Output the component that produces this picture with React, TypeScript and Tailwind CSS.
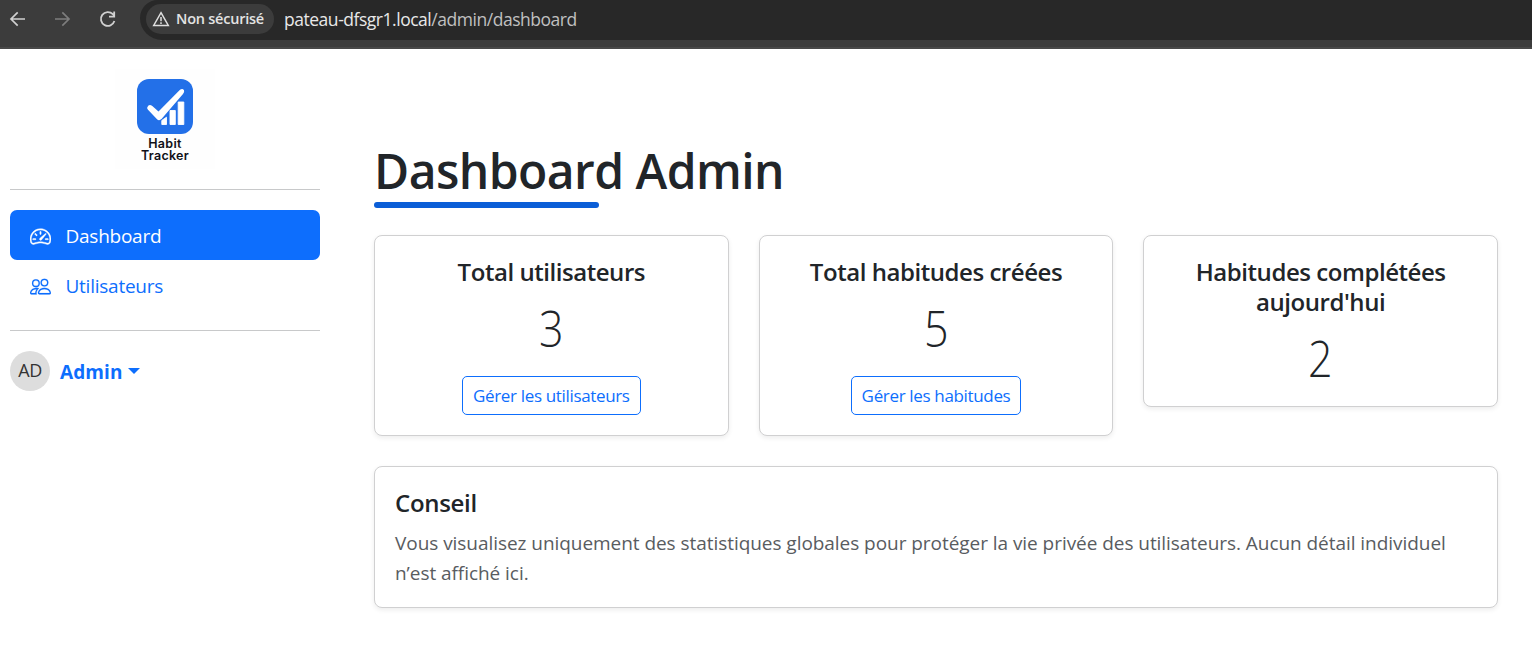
import type { ReactNode } from "react";
import { BsPeople, BsSpeedometer2 } from "react-icons/bs";

function BrowserBar() {
  return (
    <header className="flex h-[49px] items-start border-b-2 border-[#484848] bg-[#3c3c3c]">
      <div className="flex h-[37px] w-[140px] shrink-0 items-center">
        <svg className="ml-[9px] h-[18px] w-[18px]" viewBox="0 0 18 18" fill="none" stroke="#d0d0d0" strokeWidth="1.7">
          <path d="M16 9H2.5M8.7 2.3 2 9l6.7 6.7" />
        </svg>
        <svg className="ml-[27px] h-[18px] w-[18px]" viewBox="0 0 18 18" fill="none" stroke="#7d7d7d" strokeWidth="1.7">
          <path d="M1 9h13.500M8.300 2.300 15 9l-6.700 6.700" />
        </svg>
        <svg className="ml-[27px] h-[18px] w-[18px]" viewBox="0 0 18 18" fill="none" stroke="#d0d0d0" strokeWidth="1.8">
          <path d="M15.400 11A6.900 6.900 0 1 1 13.800 4.200L15.200 5.700M15.200 1.500V6.700H10" />
        </svg>
      </div>
      <div className="flex h-10 grow items-start rounded-bl-[22px] rounded-tl-[18px] bg-[#282828] pl-[6px] pt-1">
        <div className="flex h-[30px] w-32 items-center rounded-full bg-[#3c3c3c] pl-[6px]">
          <svg className="h-[18px] w-[18px] shrink-0" viewBox="0 0 18 18" fill="none" stroke="#dedede" strokeWidth="1.5">
            <path d="M9 2.700 16.300 15.500H1.700Z" />
            <path d="M9 7v4.300M9 12.300v1.700" />
          </svg>
          <span className="ml-[6px] whitespace-nowrap text-[14.5px] font-semibold tracking-[-0.23px] text-[#e3e3e3]">Non sécurisé</span>
        </div>
        <span className="ml-[10px] whitespace-nowrap text-[17.500px] leading-[31px] tracking-[-0.47px] text-[#e8e8e8]">
          pateau-dfsgr1.local<span className="text-[#c0c0c0]">/admin/dashboard</span>
        </span>
      </div>
    </header>
  );
}

function Logo() {
  return (
    <div className="mx-auto flex h-[100px] w-[100px] flex-col items-center bg-[#fefefe] pt-[10px]">
      <svg className="h-[55px] w-[56px] shrink-0" viewBox="0 0 56 55">
        <rect width="56" height="55" rx="12" fill="#2370e8" />
        <path
          d="M10.300 28.300Q12 24.300 15.300 27L21.500 32.500 43 10.800Q45.500 8.800 47 11.300 47.700 13 46 15L24.500 40Q22 42.300 19.800 39.900L11 30.800Q9.800 29.700 10.300 28.300Z"
          fill="#fff"
        />
        <path d="M24.800 41.500 29.500 38.200V45.500h-4.700ZM33 31.500h5.300v14H33ZM41.200 23h5.600v22.500h-5.600Z" fill="#fff" stroke="#fff" strokeWidth=".9" strokeLinejoin="round" />
      </svg>
      <div className="mt-1 text-center font-['Inter',sans-serif] text-[12.5px] font-semibold leading-[12px] tracking-[0.3px] text-[#101018]">
        Habit
        <br />
        Tracker
      </div>
    </div>
  );
}

function Sidebar() {
  return (
    <aside className="w-[330px] shrink-0 px-[10px] pt-5">
      <Logo />
      <hr className="mt-5 border-[#c8c9ca]" />
      <nav className="mt-5 text-[19px] leading-[30px]">
        <a className="flex h-[50px] items-center rounded-[7px] bg-[#0d6efd] pl-[19.5px] pt-0.5 text-white">
          <BsSpeedometer2 className="h-[21px] w-[21px]" stroke="currentColor" strokeWidth={0.3} />
          <span className="ml-[15px] tracking-[-0.25px]">Dashboard</span>
        </a>
        <a className="flex h-[50px] items-center pl-[19.5px] pt-0.5 text-[#0d6efd]">
          <BsPeople className="h-[21px] w-[21px]" stroke="currentColor" strokeWidth={0.1} />
          <span className="ml-[15px] tracking-[-0.25px]">Utilisateurs</span>
        </a>
      </nav>
      <hr className="mt-5 border-[#c8c9ca]" />
      <div className="mt-5 flex items-center text-[#0d6efd]">
        <div className="flex h-10 w-10 items-center justify-center rounded-full bg-[#ddd] pb-0.5 text-[18px] tracking-[-0.5px] text-[#333]">AD</div>
        <span className="ml-[10px] pt-0.5 text-[19px] font-bold tracking-[0.1px]">Admin</span>
        <span className="ml-[5px] border-x-[6px] border-t-[6px] border-x-transparent border-t-[#0d6efd]" />
      </div>
    </aside>
  );
}

function Card({ className = "", children }: { className?: string; children: ReactNode }) {
  return (
    <section className={`rounded-lg border border-[#d0d0d1] bg-white px-5 pb-5 pt-[21px] shadow-[0_2px_5px_rgba(0,0,0,0.075)] ${className}`}>
      {children}
    </section>
  );
}

function StatCard({ title, value, action }: { title: string; value: number; action?: string }) {
  return (
    <Card className="flex flex-col items-center text-center">
      <h2 className="text-[24px] font-[560] leading-[30px] tracking-[-0.45px]">{title}</h2>
      <p className="mt-[11px] h-[58px] scale-x-[0.86] text-[50px] font-light leading-[60px]">{value}</p>
      {action && (
        <button className="mt-5 h-[39px] whitespace-nowrap rounded-[5px] border border-[#0d6efd] px-[10px] text-[17px] tracking-[-0.34px] text-[#0d6efd]">
          {action}
        </button>
      )}
    </Card>
  );
}

export default function App() {
  return (
    <div className="h-[655px] overflow-hidden bg-white font-['Open_Sans',sans-serif] text-[#212529]">
      <BrowserBar />
      <div className="flex">
        <Sidebar />
        <main className="grow pl-11 pr-[34px] pt-[92px]">
          <h1 className="whitespace-nowrap text-[48px] font-[560] leading-[60px] tracking-[-0.55px]">Dashboard Admin</h1>
          <div className="mt-px h-[6px] w-[225px] rounded-full bg-[#0b5ed7]" />
          <div className="mt-[27px] grid grid-cols-3 items-start gap-[30px]">
            <StatCard title="Total utilisateurs" value={3} action="Gérer les utilisateurs" />
            <StatCard title="Total habitudes créées" value={5} action="Gérer les habitudes" />
            <StatCard title="Habitudes complétées aujourd'hui" value={2} />
          </div>
          <Card className="mt-[30px] h-[142px]">
            <h2 className="text-[24px] font-[560] leading-[30px] tracking-[-0.3px]">Conseil</h2>
            <p className="mt-[10px] text-[19px] leading-[30px] tracking-[-0.05px] text-[#595c5f]">
              Vous visualisez uniquement des statistiques globales pour protéger la vie privée des utilisateurs. Aucun détail individuel
              <br />
              n’est affiché ici.
            </p>
          </Card>
        </main>
      </div>
    </div>
  );
}
